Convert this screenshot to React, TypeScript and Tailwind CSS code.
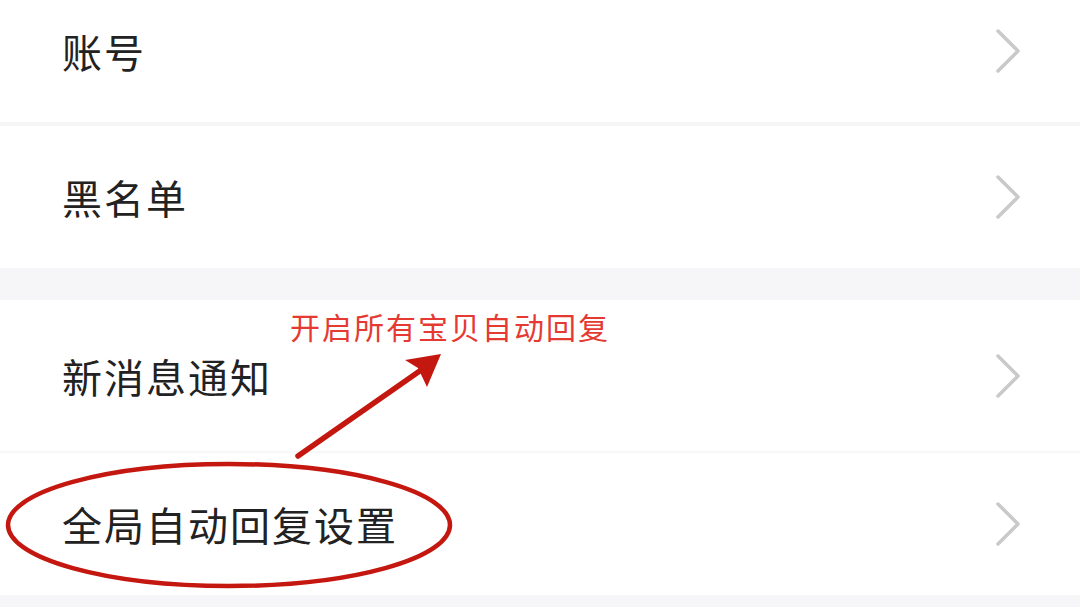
import { Fragment } from 'react';

const font = { fontFamily: '"Noto Sans CJK SC", "Noto Sans", sans-serif' };

function Chevron() {
  return (
    <svg width="26" height="46" viewBox="0 0 26 46" fill="none" className="shrink-0">
      <polyline
        points="3,3 23,23 3,43"
        stroke="#c9c9c9"
        strokeWidth="3.5"
        strokeLinecap="round"
        strokeLinejoin="round"
      />
    </svg>
  );
}

function Row({ label, height }: { label: string; height: string }) {
  return (
    <div className={`flex items-center justify-between bg-white pl-[62px] pr-[59px] ${height}`}>
      <span className="text-[40px] leading-none text-[#222222] tracking-[2px]">{label}</span>
      <Chevron />
    </div>
  );
}

export default function App() {
  return (
    <div className="relative h-[607px] w-[1080px] overflow-hidden bg-[#f6f6f8]" style={font}>
      {/* 第一组 */}
      <div className="-mt-[20px] flex flex-col">
        <Row label="账号" height="h-[142px]" />
        <div className="h-[4px] bg-[#f5f5f6]" />
        <Row label="黑名单" height="h-[142px]" />
      </div>

      <div className="h-[32px] bg-[#f6f6f8]" />

      {/* 第二组 */}
      <div className="flex flex-col">
        <Row label="新消息通知" height="h-[151px]" />
        <div className="h-[2px] bg-[#f8f8f9]" />
        <Row label="全局自动回复设置" height="h-[142px]" />
      </div>

      {/* 标注 */}
      <span className="absolute left-[290px] top-[306px] text-[30px] leading-[40px] tracking-[2px] text-[#e53a32]">
        开启所有宝贝自动回复
      </span>
      <svg className="pointer-events-none absolute inset-0" width="1080" height="607" viewBox="0 0 1080 607">
        <ellipse cx="229" cy="525" rx="221" ry="61" fill="none" stroke="#c4170f" strokeWidth="4.5" />
        <line x1="298" y1="456" x2="424" y2="368" stroke="#c4170f" strokeWidth="5.5" strokeLinecap="round" />
        <polygon points="441,354 405,360 418,368 427,387" fill="#c4170f" />
      </svg>
    </div>
  );
}
